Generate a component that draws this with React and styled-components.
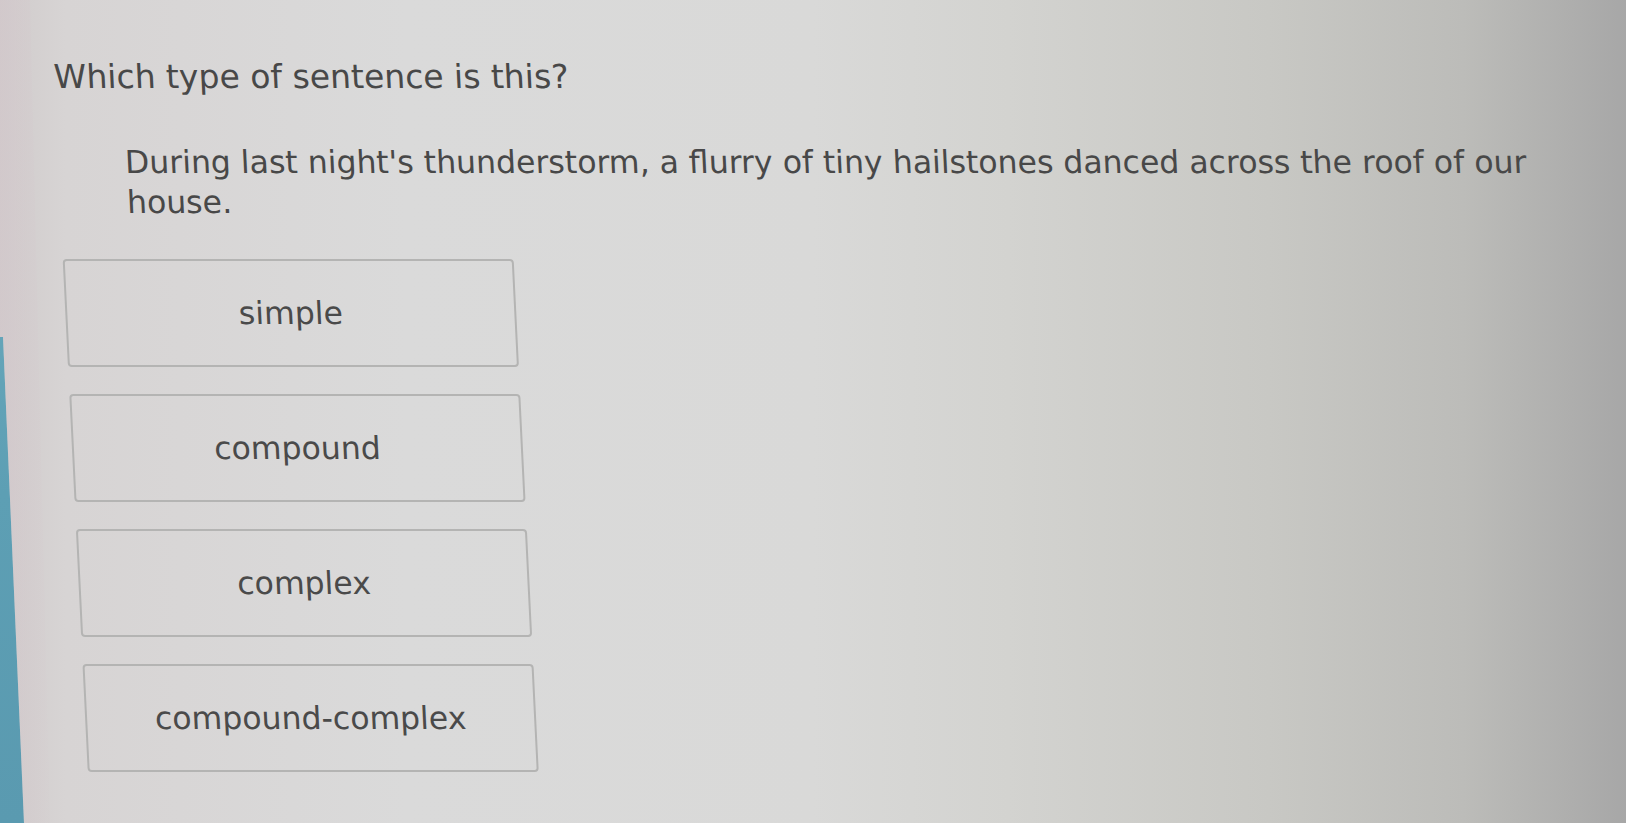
import React from 'react'
import styled, { createGlobalStyle } from 'styled-components'

const GlobalStyle = createGlobalStyle`
  html, body {
    margin: 0;
    padding: 0;
    overflow: hidden;
  }
  body {
    font-family: "DejaVu Sans", Verdana, sans-serif;
  }
`;

const Page = styled.div`
  position: relative;
  width: 100vw;
  height: 100vh;
  overflow: hidden;
  background: linear-gradient(
    90deg,
    #d0cbcb 0%,
    #d7d4d4 4%,
    #dadada 25%,
    #d9d9d8 50%,
    #d3d3d0 62%,
    #c8c8c4 78%,
    #bcbcb9 90%,
    #a7a7a7 100%
  );

  /* teal edge of the window frame, bottom left */
  &::before {
    content: '';
    position: absolute;
    left: 0;
    top: 0;
    width: 40px;
    height: 100%;
    background: linear-gradient(180deg, #74b0c2 0%, #5d9fb4 60%, #5a9ab0 100%);
    clip-path: polygon(0 337px, 3px 337px, 24px 100%, 0 100%);
  }

  /* soft pinkish glare next to it */
  &::after {
    content: '';
    position: absolute;
    left: 0;
    top: 0;
    width: 60px;
    height: 100%;
    background: linear-gradient(90deg, rgba(212, 198, 204, 0.45), rgba(212, 198, 204, 0));
    clip-path: polygon(0 0, 30px 0, 50px 100%, 24px 100%, 3px 337px, 0 337px);
  }
`;

// the whole question is tilted a little, like the screen it sits on
const Tilt = styled.div`
  transform: skewX(2.8deg);
  transform-origin: 0 0;
  padding: 57px 0 0 50px;
  color: #4a4a4a;
`;

const Question = styled.h1`
  margin: 0;
  font-size: 33px;
  font-weight: normal;
  line-height: 40px;
  color: #484848;
`;

const Sentence = styled.p`
  margin: 45px 0 0 67px;
  width: 1450px;
  font-size: 31.5px;
  line-height: 40px;
  color: #484848;
`;

const Choices = styled.div`
  display: flex;
  flex-direction: column;
  gap: 27px;
  margin-top: 37px;
`;

const Choice = styled.button`
  display: flex;
  align-items: center;
  justify-content: center;
  width: 451px;
  height: 108px;
  padding: 0;
  border: 2px solid #b4b4b3;
  border-radius: 4px;
  background: transparent;
  font-family: "DejaVu Sans", Verdana, sans-serif;
  font-size: 31.5px;
  color: #4a4a4a;
  cursor: pointer;
`;

const options = ['simple', 'compound', 'complex', 'compound-complex'];

export default function App() {
  return (
    <Page>
      <GlobalStyle />
      <Tilt>
        <Question>Which type of sentence is this?</Question>
        <Sentence>
          During last night's thunderstorm, a flurry of tiny hailstones danced across the roof of our house.
        </Sentence>
        <Choices>
          {options.map((o) => (
            <Choice key={o}>{o}</Choice>
          ))}
        </Choices>
      </Tilt>
    </Page>
  )
}
